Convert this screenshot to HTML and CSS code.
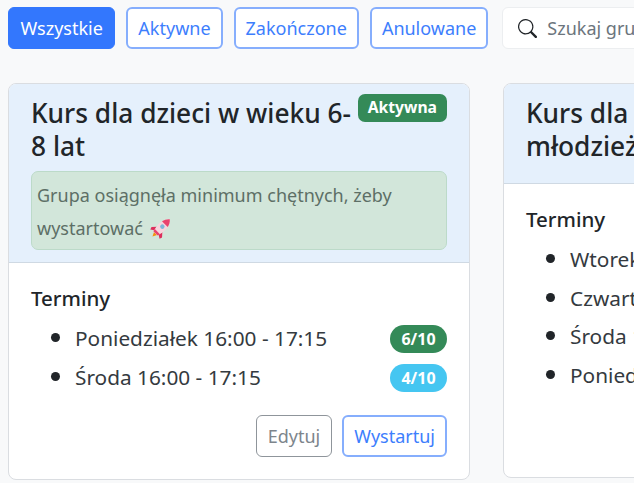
FILE: index.html
```html
<!DOCTYPE html>
<html lang="pl">
<head>
    <meta charset="UTF-8">
    <meta name="viewport" content="width=device-width, initial-scale=1.0">
    <title>Grupy</title>
    <link rel="stylesheet" href="styles.css">
</head>
<body>
    <div class="toolbar">
        <button type="button" class="btn btn-primary">Wszystkie</button>
        <button type="button" class="btn btn-outline">Aktywne</button>
        <button type="button" class="btn btn-outline">Zakończone</button>
        <button type="button" class="btn btn-outline">Anulowane</button>
        <div class="search">
            <svg class="search-icon" viewBox="0 0 16 16" fill="currentColor">
                <path d="M11.742 10.344a6.5 6.5 0 1 0-1.397 1.398h-.001c.03.04.062.078.098.115l3.85 3.85a1 1 0 0 0 1.415-1.414l-3.85-3.85a1.007 1.007 0 0 0-.115-.1zM12 6.5a5.5 5.5 0 1 1-11 0 5.5 5.5 0 0 1 11 0z"/>
            </svg>
            <input type="text" placeholder="Szukaj grupy...">
        </div>
    </div>

    <div class="cards">
        <div class="card">
            <div class="card-header">
                <div class="card-title-row">
                    <h2>Kurs dla dzieci w wieku 6-8 lat</h2>
                    <span class="badge badge-success">Aktywna</span>
                </div>
                <div class="alert">
                    Grupa osiągnęła minimum chętnych, żeby wystartować
                    <svg class="rocket" viewBox="0 0 24 24">
                        <g transform="rotate(45 12 12)">
                            <path d="M9.5 20 L12 25 L14.5 20 Z" fill="#f4900c"/>
                            <path d="M8 13 L3.5 18 L4.5 21 L8.5 18.5 Z M16 13 L20.5 18 L19.5 21 L15.5 18.5 Z" fill="#dd2e5c"/>
                            <path d="M12 -3 C16.5 1 17.5 7 17 12 C16.8 15 16 18 15 20 L9 20 C8 18 7.2 15 7 12 C6.5 7 7.5 1 12 -3 Z" fill="#f7d5dd"/>
                            <path d="M12 -3 C14.5 -0.8 16 2 16.6 5 L7.4 5 C8 2 9.5 -0.8 12 -3 Z" fill="#e8436e"/>
                            <path d="M8.5 20 L15.5 20 L16.1 17 L7.9 17 Z" fill="#e8436e"/>
                            <circle cx="12" cy="9" r="2.5" fill="#7cb8d8"/>
                        </g>
                    </svg>
                </div>
            </div>
            <div class="card-body">
                <h3>Terminy</h3>
                <ul class="terms">
                    <li><span>Poniedziałek 16:00 - 17:15</span><span class="pill pill-success">6/10</span></li>
                    <li><span>Środa 16:00 - 17:15</span><span class="pill pill-info">4/10</span></li>
                </ul>
                <div class="actions">
                    <button type="button" class="btn btn-grey">Edytuj</button>
                    <button type="button" class="btn btn-outline">Wystartuj</button>
                </div>
            </div>
        </div>

        <div class="card card-short">
            <div class="card-header">
                <div class="card-title-row">
                    <h2>Kurs dla zaawansowanej młodzieży</h2>
                    <span class="badge badge-success">Aktywna</span>
                </div>
            </div>
            <div class="card-body">
                <h3>Terminy</h3>
                <ul class="terms">
                    <li><span>Wtorek 16:00 - 17:15</span></li>
                    <li><span>Czwartek 16:00 - 17:15</span></li>
                    <li><span>Środa 18:00 - 19:15</span></li>
                    <li><span>Poniedziałek 18:00 - 19:15</span></li>
                </ul>
            </div>
        </div>
    </div>
</body>
</html>
```

FILE: styles.css
```css
html, body {
    height: 100%;
}
body {
    font-family: "Noto Sans", sans-serif;
    font-size: 19px;
    line-height: 1.5;
    color: #212529;
    background-color: #f8f9fa;
    margin: 0;
    overflow: hidden;
}
.toolbar {
    display: flex;
    gap: 11px;
    padding: 7px 8px 0;
    width: 800px;
}
.btn {
    font-family: inherit;
    font-size: 18px;
    line-height: 1.5;
    height: 42px;
    padding: 0 11px;
    border-radius: 6px;
    background-color: #fff;
    border: 1px solid #0d6efd;
    cursor: pointer;
}
.btn-primary {
    padding: 0 11.5px;
    background-color: #3377fd;
    border-color: #3377fd;
    color: #fff;
}
.btn-outline {
    padding: 0 10px;
    border: 2px solid #86aefd;
    color: #3d7efd;
}
.btn-grey {
    border-color: #8f959b;
    color: #7d858c;
}
.search {
    display: flex;
    align-items: center;
    gap: 10px;
    width: 300px;
    height: 42px;
    box-sizing: border-box;
    margin-left: 3px;
    padding: 0 15px;
    background-color: #fff;
    border: 1px solid #eceef0;
    border-radius: 6px;
}
.search-icon {
    width: 19px;
    height: 19px;
    flex: none;
    color: #212529;
}
.search input {
    flex: 1;
    min-width: 0;
    border: none;
    outline: none;
    padding: 0;
    font-family: inherit;
    font-size: 18px;
}
.search input::placeholder {
    color: #6c757d;
}
.cards {
    display: flex;
    align-items: flex-start;
    gap: 33px;
    padding: 34px 8px 0;
    width: 1000px;
}
.card {
    width: 462px;
    height: 397px;
    box-sizing: border-box;
    display: flex;
    flex-direction: column;
    background-color: #fff;
    border: 1px solid #dadde1;
    border-radius: 8px;
    overflow: hidden;
}
.card-short {
    height: 395px;
}
.card-header {
    background-color: #e5f0fc;
    border-bottom: 1px solid #cfd9e3;
    padding: 13px 22px 12px;
}
.card-title-row {
    display: flex;
    justify-content: space-between;
    align-items: flex-start;
    gap: 5px;
    margin-bottom: 8px;
}
h2 {
    margin: 0;
    font-size: 26.3px;
    font-weight: 500;
    line-height: 33px;
}
.badge {
    flex: none;
    margin-top: -3px;
    font-size: 15.7px;
    font-weight: 700;
    line-height: 20px;
    padding: 3px 10px 5px;
    border-radius: 7px;
    color: #fff;
}
.badge-success {
    background-color: #348a58;
}
.alert {
    height: 79px;
    box-sizing: border-box;
    padding: 7px 5px;
    font-size: 18px;
    line-height: 33px;
    color: #5d6f66;
    background-color: #d2e6da;
    border: 1px solid #bcdac9;
    border-radius: 7px;
}
.rocket {
    width: 21px;
    height: 21px;
    vertical-align: -4px;
    margin-left: 2px;
    overflow: visible;
}
.card-body {
    flex: 1;
    display: flex;
    flex-direction: column;
    padding: 20px 22px 22px;
}
h3 {
    margin: 0;
    font-size: 20.5px;
    font-weight: 500;
    line-height: 30px;
}
.terms {
    margin: 6px 0 0;
    padding: 0 0 0 44px;
}
.terms li {
    height: 38.5px;
    line-height: 36.5px;
    font-size: 20.8px;
    color: #343a40;
}
.terms li::marker {
    font-size: 24px;
    color: #212529;
}
.terms li span:first-child {
    float: left;
}
.pill {
    float: right;
    margin-top: 5px;
    width: 57px;
    height: 28px;
    line-height: 28px;
    text-align: center;
    font-size: 16px;
    font-weight: 700;
    color: #fff;
    border-radius: 14px;
}
.pill-success {
    background-color: #348a58;
}
.pill-info {
    background-color: #45c6f1;
}
.actions {
    margin-top: auto;
    display: flex;
    justify-content: flex-end;
    gap: 10px;
}
```
